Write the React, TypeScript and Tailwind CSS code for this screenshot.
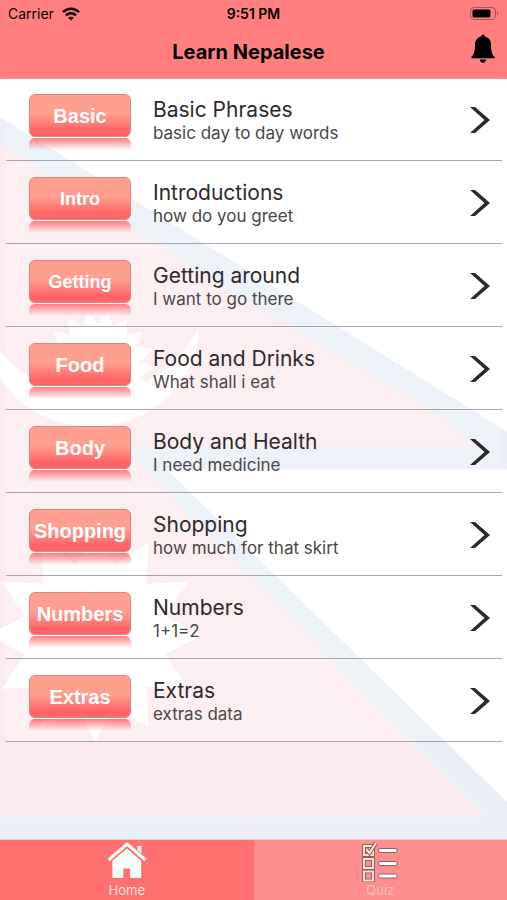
import { useState } from 'react';
import clsx from 'clsx';

type Lesson = {
  badge: string;
  title: string;
  subtitle: string;
  small?: boolean;
};

const lessons: Lesson[] = [
  { badge: 'Basic', title: 'Basic Phrases', subtitle: 'basic day to day words' },
  { badge: 'Intro', title: 'Introductions', subtitle: 'how do you greet', small: true },
  { badge: 'Getting', title: 'Getting around', subtitle: 'I want to go there', small: true },
  { badge: 'Food', title: 'Food and Drinks', subtitle: 'What shall i eat' },
  { badge: 'Body', title: 'Body and Health', subtitle: 'I need medicine' },
  { badge: 'Shopping', title: 'Shopping', subtitle: 'how much for that skirt' },
  { badge: 'Numbers', title: 'Numbers', subtitle: '1+1=2' },
  { badge: 'Extras', title: 'Extras', subtitle: 'extras data' },
];

// Points of a star with n rays, starting from the right-hand ray
const starPoints = (cx: number, cy: number, outer: number, inner: number, rays: number) =>
  Array.from({ length: rays * 2 }, (_, i) => {
    const r = i % 2 === 0 ? outer : inner;
    const a = (Math.PI * i) / rays;
    return `${(cx + r * Math.cos(a)).toFixed(1)},${(cy + r * Math.sin(a)).toFixed(1)}`;
  }).join(' ');

const FlagBackground = () => (
  <svg
    className="absolute inset-0 w-full h-full"
    viewBox="0 79 507 761"
    preserveAspectRatio="none"
    aria-hidden="true"
  >
    <path d="M0 117 L507 432 V470 H167 L507 803 V840 H0 Z" fill="#e9eef7" />
    <path d="M0 144 L254 306 L436 413 L474 448 H122 L487 818 H0 Z" fill="#fbebee" />
    <path d="M-15 328 A107 99 0 0 0 199 328 A119 119 0 0 1 -15 328 Z" fill="#fff" />
    <polygon points={starPoints(98, 369, 58, 44, 18)} fill="#fff" />
    <polygon points={starPoints(95, 636, 107, 73, 12)} fill="#fff" />
  </svg>
);

const StatusBar = () => (
  <div className="grid grid-cols-3 items-center h-7 px-2 text-sm">
    <div className="flex items-center gap-2">
      <span>Carrier</span>
      <svg width="18" height="14" viewBox="0 0 18 14" aria-hidden="true">
        <g fill="none" stroke="#000" strokeWidth="2.6">
          <path d="M1 5.2 C5.5 0.6 12.5 0.6 17 5.2" />
          <path d="M4 8.4 C7 5.6 11 5.6 14 8.4" />
        </g>
        <path d="M9 13.6 L6.3 10.8 C7.8 9.4 10.2 9.4 11.7 10.8 Z" />
      </svg>
    </div>
    <span className="text-center font-semibold">9:51 PM</span>
    <svg className="justify-self-end" width="30" height="14" viewBox="0 0 30 14" aria-hidden="true">
      <rect x="1.5" y="0.5" width="25" height="12" rx="3.5" fill="none" stroke="#a85252" />
      <rect x="3.5" y="2.5" width="18" height="8" rx="1.5" />
      <path d="M28 4.5 V8.5 C29.6 8 29.6 5 28 4.5 Z" fill="#a85252" />
    </svg>
  </div>
);

const Header = () => (
  <header className="h-[79px] bg-[#ff7f7f] text-black">
    <StatusBar />
    <div className="grid grid-cols-[1fr_auto_1fr] items-center h-12 pl-0.5 pr-3">
      <h1 className="col-start-2 text-xl font-bold">Learn Nepalese</h1>
      <button aria-label="Notifications" className="justify-self-end -mt-1.5">
        <svg width="24" height="30" viewBox="0 0 24 30" aria-hidden="true">
          <path d="M12 0.5 C10.9 0.5 10.2 1.3 10.2 2.4 C6 3.4 4 6.6 4 10.6 C4 17.5 3.2 20.4 0.6 22.6 C0 23.3 0.3 24.2 1.2 24.2 H22.8 C23.7 24.2 24 23.3 23.4 22.6 C20.8 20.4 20 17.5 20 10.6 C20 6.6 18 3.4 13.8 2.4 C13.8 1.3 13.1 0.5 12 0.5 Z" />
          <path d="M8.8 25.6 H15.2 C15.2 27.6 13.8 28.8 12 28.8 C10.2 28.8 8.8 27.6 8.8 25.6 Z" />
        </svg>
      </button>
    </div>
  </header>
);

const Badge = ({ label, small }: { label: string; small?: boolean }) => (
  <div className="w-[102px] shrink-0">
    <div
      className={clsx(
        'flex items-center justify-center h-[43px] rounded-md border border-[#d98684] bg-linear-to-b from-[#ff9f90] from-45% to-[#ff6467] to-85% text-white font-bold font-["Liberation_Sans",Arial,sans-serif]',
        small ? 'text-lg' : 'text-xl'
      )}
    >
      {label}
    </div>
    <div className="h-3 mt-px rounded-t-md bg-linear-to-b from-[#ff6467]/85 to-[#ff9f90]/0" />
  </div>
);

const LessonRow = ({ badge, title, subtitle, small }: Lesson) => (
  <li>
    <a
      href={`#${badge.toLowerCase()}`}
      className="flex items-center h-[83px] pt-1.5 pl-[23px] pr-3 border-b border-[#a9a5a8] bg-white/20"
    >
      <Badge label={badge} small={small} />
      <div className="flex-1 ml-[22px] -mt-0.5">
        <div className="text-[21px] leading-6 text-[#2d2a2c]">{title}</div>
        <div className="text-[17px] leading-[22px] text-[#4a4648]">{subtitle}</div>
      </div>
      <svg className="-mt-1" width="20" height="26" viewBox="0 0 20 26" aria-hidden="true">
        <polygon points="0,0 5,0 20,13 5,26 0,26 14.5,13" fill="#2a2a2a" />
      </svg>
    </a>
  </li>
);

const HomeIcon = () => (
  <svg width="40" height="36" viewBox="0 0 40 36" aria-hidden="true">
    <path d="M30.5 4 H34.5 V11.5 L30.5 8 Z" fill="#fff" />
    <path d="M1.5 18 L20 2 L38.5 18" fill="none" stroke="#fff" strokeWidth="3" />
    <path d="M20 6.5 L34.2 18.8 V36 H23.2 V26.5 H16.4 V36 H5.4 V18.8 Z" fill="#f5fffa" />
  </svg>
);

const QuizIcon = () => (
  <svg width="36" height="40" viewBox="0 0 36 40" aria-hidden="true">
    {[4, 17, 29.5].map(y => (
      <g key={y}>
        <rect x="2" y={y} width="9" height="9" fill="none" stroke="#7d5552" strokeWidth="3.6" />
        <rect x="2" y={y} width="9" height="9" fill="none" stroke="#f5e2d8" strokeWidth="2" />
        <rect x="16.5" y={y + 2.5} width="18.5" height="4" rx="1.5" fill="#fff" stroke="#8a6460" />
      </g>
    ))}
    <path d="M4.5 7.5 L7.5 11 L14 1" fill="none" stroke="#7d5552" strokeWidth="3.8" />
    <path d="M4.5 7.5 L7.5 11 L14 1" fill="none" stroke="#fbeee2" strokeWidth="2" />
  </svg>
);

const App = () => {
  const [tab, setTab] = useState<'home' | 'quiz'>('home');

  const tabClass = (active: boolean) =>
    clsx(
      'flex flex-1 flex-col items-center justify-end h-[60px] pb-0.5 text-[13px] leading-4',
      active ? 'bg-[#ff7070] text-[#ffe3e0]' : 'bg-[#ff8f8f] text-[#e8c4be]'
    );

  return (
    <div className='flex flex-col min-h-screen bg-white font-["Inter",sans-serif]'>
      <Header />

      <main className="relative flex-1">
        <FlagBackground />
        <ul className="relative -mt-px ml-1.5 mr-[5px]">
          {lessons.map(lesson => (
            <LessonRow key={lesson.badge} {...lesson} />
          ))}
        </ul>
      </main>

      <nav className="sticky bottom-0 flex border-t border-[#dcc8cf]">
        <button className={tabClass(tab === 'home')} onClick={() => setTab('home')}>
          <HomeIcon />
          <span className="mt-1">Home</span>
        </button>
        <button className={tabClass(tab === 'quiz')} onClick={() => setTab('quiz')}>
          <QuizIcon />
          <span>Quiz</span>
        </button>
      </nav>
    </div>
  );
};

export default App;
